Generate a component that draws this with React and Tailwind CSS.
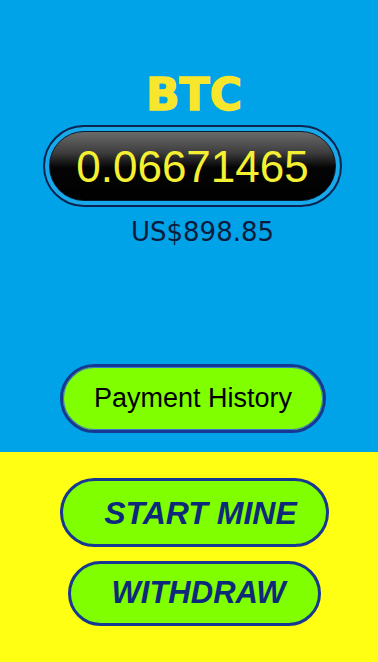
import React from 'react';

const App = () => {
  return (
    <div className="w-[378px] h-[662px] overflow-hidden flex flex-col font-['Liberation_Sans',Arial,sans-serif]">
      <div className="h-[452px] bg-[#00a2e8] flex flex-col items-center pt-[73px]">
        <h1 className="ml-[10px] text-[44px] leading-none font-bold text-[#f8e62c] font-['DejaVu_Sans',sans-serif] [-webkit-text-stroke:1.5px_#f8e62c]">
          BTC
        </h1>

        <div className="mt-[8px] ml-[7px] w-[299px] h-[82px] rounded-full border-2 border-[#0b2550] bg-[#17a9ea] p-[4px]">
          <div className="w-full h-full rounded-full border border-[#0a1a30] bg-[linear-gradient(180deg,#6a6a6a_0%,#3e3e3e_30%,#050505_52%,#000000_100%)] flex items-center justify-center">
            <span className="text-[44px] leading-none text-[#f5f032] pt-[2px]">
              0.06671465
            </span>
          </div>
        </div>

        <p className="mt-[12px] ml-[27px] text-[26px] leading-none text-[#0b1c3c] font-['DejaVu_Sans',sans-serif]">
          US$898.85
        </p>

        <button className="mt-[119px] ml-[8px] w-[266px] h-[69px] rounded-full border-[3px] border-[#163892] bg-[#80ff00] shadow-[inset_0_0_0_1px_#3a7ad0] text-[27px] text-black flex items-center justify-center">
          Payment History
        </button>
      </div>

      <div className="flex-1 bg-[#ffff14] flex flex-col items-center pt-[26px] gap-[14px]">
        <button className="ml-[11px] w-[269px] h-[69px] rounded-full border-[3px] border-[#163892] bg-[#80ff00] pl-[12px] text-[32px] font-bold italic text-[#0d2a7a] flex items-center justify-center">
          START MINE
        </button>
        <button className="ml-[11px] w-[253px] h-[65px] rounded-full border-[3px] border-[#163892] bg-[#80ff00] pl-[8px] text-[31px] font-bold italic text-[#0d2a7a] flex items-center justify-center">
          WITHDRAW
        </button>
      </div>
    </div>
  );
};

export default App;
